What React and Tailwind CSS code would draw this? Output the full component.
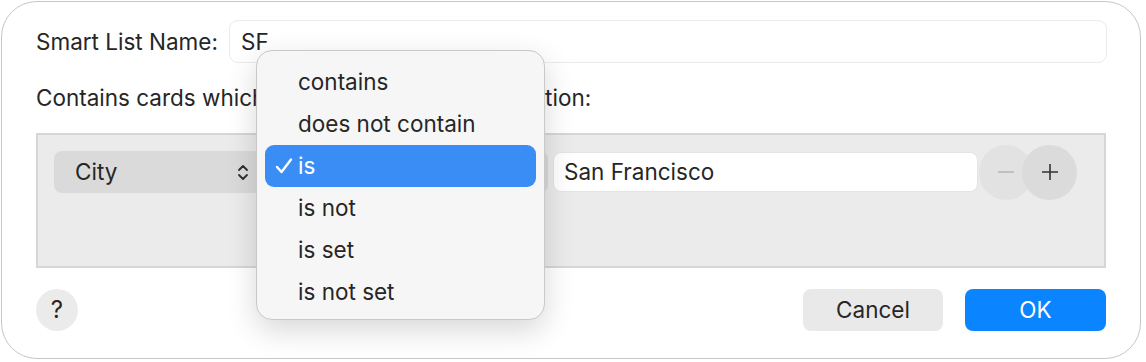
import React from 'react';

const OPTIONS = ['contains', 'does not contain', 'is', 'is not', 'is set', 'is not set'];

function Chevrons() {
  return (
    <svg width="12" height="17" viewBox="0 0 12 17" fill="none" stroke="#2e2e2e" strokeWidth="1.8" strokeLinecap="round" strokeLinejoin="round">
      <path d="M2 6 L6 2 L10 6" />
      <path d="M2 11 L6 15 L10 11" />
    </svg>
  );
}

export default function App() {
  return (
    <div className="w-[1146px] h-[362px] bg-white pt-px pl-px font-['Inter',sans-serif] text-[22.5px] text-[#262626]">
      <div className="relative w-[1140px] h-[358px] rounded-[36px] border border-[#c6c6c6] bg-white">
        {/* Name */}
        <div className="flex items-center pt-[18px] pl-[34px] pr-[33px]">
          <span className="flex-1">Smart List Name:</span>
          <div className="w-[878px] h-[43px] rounded-[9px] border border-[#ebebeb] px-[11px] flex items-center">
            SF
          </div>
        </div>

        <div className="mt-[23px] pl-[34px] h-[24px] leading-[24px]">
          Contains cards which match the following condition:
        </div>

        {/* Criteria box */}
        <div className="mt-[23px] ml-[34px] w-[1070px] h-[135px] border-2 border-[#d6d6d6] bg-[#ebebeb] pt-[16px] pl-[16px]">
          <div className="flex items-center h-[42px]">
            <div className="w-[208px] h-[42px] rounded-[8px] bg-[#dadada] pl-[21px] pr-[13px] flex items-center justify-between">
              <span>City</span>
              <Chevrons />
            </div>
            <div className="ml-[4px] w-[282px] h-[42px] rounded-[8px] bg-[#dadada] pl-[21px] pr-[13px] flex items-center justify-between">
              <span>is</span>
              <Chevrons />
            </div>
            <div className="ml-[5px] w-[425px] h-[40px] rounded-[8px] bg-white border border-[#e4e4e4] px-[10px] flex items-center">
              San Francisco
            </div>
            <div className="ml-px w-[54px] h-[55px] shrink-0 rounded-full bg-[#e2e2e2] flex items-center justify-center">
              <svg width="16" height="16" viewBox="0 0 16 16" stroke="#b8b8b8" strokeWidth="1.6">
                <path d="M0 8 H16" />
              </svg>
            </div>
            <div className="-ml-[11px] w-[55px] h-[55px] shrink-0 rounded-full bg-[#dbdbdb] flex items-center justify-center">
              <svg width="16" height="16" viewBox="0 0 16 16" stroke="#333" strokeWidth="1.6">
                <path d="M0 8 H16 M8 0 V16" />
              </svg>
            </div>
          </div>
        </div>

        {/* Footer */}
        <div className="mt-[21px] mx-[34px] flex items-center justify-between">
          <div className="w-[42px] h-[42px] rounded-full bg-[#ebebeb] flex items-center justify-center text-[24px]">?</div>
          <div className="flex gap-[22px]">
            <div className="w-[140px] h-[42px] rounded-[8px] bg-[#e9e9e9] flex items-center justify-center">Cancel</div>
            <div className="w-[141px] h-[42px] rounded-[8px] bg-[#0a84ff] flex items-center justify-center text-white">OK</div>
          </div>
        </div>

        {/* Popup menu */}
        <div className="absolute left-[254px] top-[48px] w-[289px] h-[270px] rounded-[16px] border border-[#c9c9c9] bg-[#f6f6f6] shadow-[0_10px_30px_rgba(0,0,0,0.16)] pt-[10px] px-[8px]">
          {OPTIONS.map((o) => {
            const sel = o === 'is';
            return (
              <div
                key={o}
                className={
                  sel
                    ? 'relative h-[42px] rounded-[9px] bg-[#3b8df6] text-white pl-[33px] flex items-center'
                    : 'relative h-[42px] pl-[33px] flex items-center'
                }
              >
                {sel && (
                  <svg className="absolute left-[10px] top-[12px]" width="18" height="18" viewBox="0 0 18 18" fill="none" stroke="white" strokeWidth="2.4" strokeLinecap="round" strokeLinejoin="round">
                    <path d="M2 10 L6.5 15 L16 2.5" />
                  </svg>
                )}
                {o}
              </div>
            );
          })}
        </div>
      </div>
    </div>
  );
}
